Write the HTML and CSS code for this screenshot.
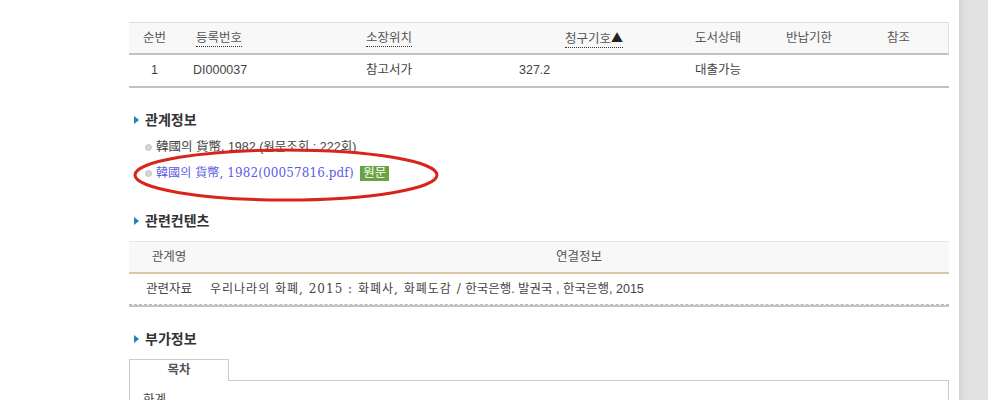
FILE: index.html
```html
<!DOCTYPE html>
<html lang="ko">

<head>
    <meta charset="UTF-8">
    <title>소장정보</title>
    <link rel="stylesheet" href="styles.css">
</head>

<body>
    <div class="page">
        <div class="content">
            <div class="holdings">
                <div class="hd c1 center">순번</div>
                <div class="hd c2"><span class="sort">등록번호</span></div>
                <div class="hd c3"><span class="sort">소장위치</span></div>
                <div class="hd c4"><span class="sort">청구기호<span class="arrow">▲</span></span></div>
                <div class="hd c5">도서상태</div>
                <div class="hd c6">반납기한</div>
                <div class="hd c7 last">참조</div>

                <div class="td c1 center">1</div>
                <div class="td c2 d2">DI000037</div>
                <div class="td c3">참고서가</div>
                <div class="td c4 d4">327.2</div>
                <div class="td c5">대출가능</div>
                <div class="td c6"></div>
                <div class="td c7"></div>
            </div>

            <h3 class="sec-title">관계정보</h3>
            <ul class="rel-list">
                <li>韓國의 貨幣, 1982 (원문조회 : 222회)</li>
                <li><a href="#" class="pdf-link">韓國의 貨幣, 1982(00057816.pdf)</a> <span class="badge">원문</span></li>
                <svg class="mark" width="310" height="56" viewBox="0 0 310 56">
                    <ellipse cx="155" cy="28" rx="151" ry="25" fill="none" stroke="#d8251b" stroke-width="3" />
                </svg>
            </ul>

            <h3 class="sec-title">관련컨텐츠</h3>
            <div class="contents">
                <div class="ct-head">
                    <div class="ct-name">관계영</div>
                    <div class="ct-info">연결정보</div>
                </div>
                <div class="ct-row">
                    <div class="ct-name">관련자료</div>
                    <div class="ct-val"><span class="serif">우리나라의 화폐, 2015 : 화폐사, 화폐도감 /</span> 한국은행. 발권국 , 한국은행, 2015</div>
                </div>
            </div>

            <h3 class="sec-title">부가정보</h3>
            <div class="tabs">
                <div class="tab active">목차</div>
                <div class="tab-rest"></div>
            </div>
            <div class="tab-body">화계</div>
        </div>
        <div class="side"></div>
    </div>
</body>

</html>
```

FILE: styles.css
```css
body {
    margin: 0;
    padding: 0;
    font-family: "Liberation Sans", "Noto Sans CJK KR", sans-serif;
    font-size: 12.5px;
    color: #444;
    background: #fff;
}

.page {
    display: flex;
    height: 400px;
    overflow: hidden;
}

.content {
    width: 820px;
    padding: 22px 10px 0 129px;
}

.side {
    flex: 1;
    background: linear-gradient(to right, #d4d4d4, #e0e0e0 6px, #e3e3e3);
}

/* holdings table */
.holdings {
    display: grid;
    grid-template-columns: 51px 170px 150px 180px 90px 100px 79px;
}

.hd {
    background: #f8f8f8;
    border-top: 1px solid #dedede;
    border-bottom: 2px solid #c2c2c2;
    height: 30px;
    line-height: 30px;
    color: #555;
}

.hd.last {
    border-right: 1px solid #dedede;
}

.td {
    height: 31px;
    line-height: 31px;
    border-bottom: 2px solid #c2c2c2;
    color: #444;
}

.center {
    text-align: center;
}

.c2, .c3, .c6 {
    padding-left: 16px;
}

.c4 {
    padding-left: 65px;
}

.c5 {
    padding-left: 15px;
}

.c7 {
    padding-left: 17px;
}

.d2 {
    padding-left: 13px;
}

.d4 {
    padding-left: 19px;
}

.sort {
    border-bottom: 1px dotted #333;
    padding-bottom: 1px;
}

.arrow {
    font-family: "Noto Sans CJK KR", sans-serif;
    font-size: 12px;
    color: #222;
}

/* section titles */
.sec-title {
    margin: 0;
    padding-left: 16px;
    position: relative;
    font-size: 14px;
    font-weight: bold;
    color: #333;
    line-height: 18px;
}

.sec-title::before {
    content: "";
    position: absolute;
    left: 5px;
    top: 5px;
    border-left: 5px solid #1b86b4;
    border-top: 4px solid transparent;
    border-bottom: 4px solid transparent;
}

.holdings + .sec-title {
    margin-top: 23px;
}

/* related list */
.rel-list {
    list-style: none;
    margin: 5px 0 0 0;
    padding: 0 0 0 16px;
    position: relative;
}

.rel-list li {
    height: 26px;
    line-height: 26px;
    padding-left: 11px;
    position: relative;
    color: #444;
}

.rel-list li::before {
    content: "";
    position: absolute;
    left: 0;
    top: 10px;
    width: 5px;
    height: 5px;
    border-radius: 50%;
    background: #d6d6d6;
    border: 1px solid #c4c4c4;
}

.pdf-link {
    color: #5c5ce0;
    text-decoration: none;
    font-family: "DejaVu Serif", "Noto Sans CJK KR", serif;
    font-size: 12px;
    letter-spacing: 0.1px;
}

.badge {
    display: inline-block;
    background: #6aa341;
    color: #fff;
    padding: 0 3px;
    line-height: 15px;
    margin-left: 3px;
}

.mark {
    position: absolute;
    left: 2px;
    top: 13px;
}

.rel-list + .sec-title {
    margin-top: 26px;
}

/* related contents */
.contents {
    margin-top: 11px;
    border-bottom: 2px solid #c4c4c4;
}

.ct-head {
    display: flex;
    background: #f8f8f8;
    border-top: 1px solid #e6e6e6;
    border-bottom: 2px solid #dcc5a4;
    height: 30px;
    line-height: 30px;
    color: #555;
}

.ct-row {
    display: flex;
    height: 30px;
    line-height: 30px;
    border-bottom: 1px dashed #bbb;
}

.ct-name {
    width: 80px;
    text-align: center;
}

.ct-info {
    flex: 1;
    text-align: center;
}

.ct-val {
    flex: 1;
    padding-left: 1px;
}

.serif {
    font-family: "DejaVu Serif", "Noto Sans CJK KR", serif;
    font-size: 12px;
    letter-spacing: 1px;
}

.contents + .sec-title {
    margin-top: 23px;
}

/* tabs */
.tabs {
    display: flex;
    margin-top: 11px;
    height: 22px;
}

.tab {
    width: 98px;
    border: 1px solid #ccc;
    border-bottom: none;
    text-align: center;
    line-height: 20px;
    font-weight: bold;
    color: #555;
}

.tab-rest {
    flex: 1;
    border-bottom: 1px solid #ccc;
}

.tab-body {
    border-left: 1px solid #ccc;
    border-right: 1px solid #ccc;
    padding: 8px 13px;
    color: #444;
    height: 60px;
}
```
